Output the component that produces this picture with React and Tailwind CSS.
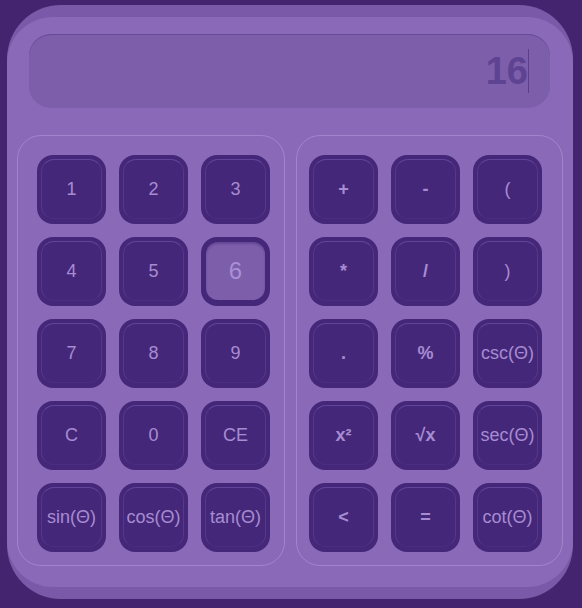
const leftKeys = ['1', '2', '3', '4', '5', '6', '7', '8', '9', 'C', '0', 'CE', 'sin(Θ)', 'cos(Θ)', 'tan(Θ)'];
const rightKeys = ['+', '-', '(', '*', '/', ')', '.', '%', 'csc(Θ)', 'x²', '√x', 'sec(Θ)', '<', '=', 'cot(Θ)'];
const boldKeys = ['+', '-', '*', '/', '.', '%', 'x²', '√x', '<', '='];

function Key({ label }) {
  if (label === '6') {
    return (
      <button className="w-[69px] h-[69px] rounded-[16px] bg-[#45277a] p-[5px] pb-[6px]">
        <div className="w-full h-full rounded-[12px] bg-[#7d5eab] shadow-[inset_0_2px_2px_rgba(60,30,110,0.35)] flex items-center justify-center text-[24px] text-[#a88fd6]">
          {label}
        </div>
      </button>
    );
  }
  return (
    <button className="w-[69px] h-[69px] rounded-[16px] bg-[#45277a] pt-1 px-1 pb-[5px]">
      <div
        className={
          'w-full h-full rounded-[13px] border border-t-[#61459a] border-x-[#553889] border-b-[#4b2e7f] flex items-center justify-center text-[18px] text-[#a68cd2] ' +
          (boldKeys.includes(label) ? 'font-bold' : 'font-normal')
        }
      >
        {label}
      </div>
    </button>
  );
}

export default function App() {
  return (
    <div className="h-[608px] bg-[#44236f] pt-[5px] pl-[7px] pr-[9px] font-['Liberation_Sans',Arial,sans-serif]">
      <div className="h-[594px] rounded-[54px] bg-[#7a5aa8] py-3">
        <div className="h-full rounded-[46px] bg-[#8a6ab8] px-[10px] pt-[17px]">
          <div className="ml-3 mr-[13px] h-[74px] rounded-[22px] bg-[#7d5eab] shadow-[inset_0_1px_0_rgba(90,60,140,0.6)] flex items-center justify-end pr-[21px]">
            <span className="text-[38px] font-bold leading-none text-[#5f4393]">16</span>
            <span className="w-px h-[44px] bg-[#5a3f8e]"></span>
          </div>
          <div className="mt-[27px] grid grid-cols-[268px_267px] gap-[11px]">
            <div className="h-[431px] rounded-[24px] border border-[#a085cd] pt-[19px] pl-[19px]">
              <div className="grid grid-cols-[69px_69px_69px] gap-[13px]">
                {leftKeys.map((k) => (
                  <Key key={k} label={k} />
                ))}
              </div>
            </div>
            <div className="h-[431px] rounded-[24px] border border-[#a085cd] pt-[19px] pl-[12px]">
              <div className="grid grid-cols-[69px_69px_69px] gap-[13px]">
                {rightKeys.map((k) => (
                  <Key key={k} label={k} />
                ))}
              </div>
            </div>
          </div>
        </div>
      </div>
    </div>
  );
}
